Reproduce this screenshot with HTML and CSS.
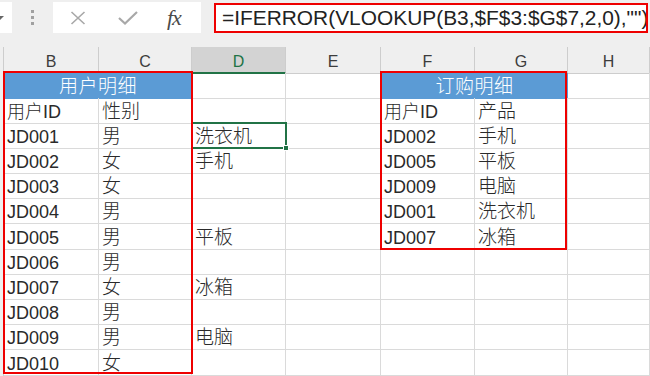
FILE: index.html
```html
<!DOCTYPE html>
<html lang="zh-CN">

<head>
    <meta charset="UTF-8" />
    <meta name="viewport" content="width=device-width, initial-scale=1.0" />
    <title>VLOOKUP 查询</title>
    <link rel="stylesheet" href="styles.css">
</head>

<body>
    <div class="toolbar">
        <div class="namebox"><span class="caret"></span></div>
        <div class="grip"><span></span><span></span><span></span></div>
        <div class="fnbox">
            <svg class="icon-x" width="16" height="14" viewBox="0 0 16 14">
                <path d="M1.5 1 L14.5 13 M14.5 1 L1.5 13" stroke="#a8a8a8" stroke-width="1.6" fill="none" />
            </svg>
            <svg class="icon-ok" width="20" height="14" viewBox="0 0 20 14">
                <path d="M1 7 L7 12.5 L19 1" stroke="#a8a8a8" stroke-width="2.2" fill="none" />
            </svg>
            <span class="fx">fx</span>
        </div>
        <div class="formula">=IFERROR(VLOOKUP(B3,$F$3:$G$7,2,0),"")</div>
    </div>

    <div class="sheet">
        <div class="row head">
            <div class="ch corner"></div>
            <div class="ch">B</div>
            <div class="ch">C</div>
            <div class="ch active">D</div>
            <div class="ch">E</div>
            <div class="ch">F</div>
            <div class="ch">G</div>
            <div class="ch">H</div>
        </div>

        <div class="row">
            <div class="rh"></div>
            <div class="c title zh">用户明细</div>
            <div class="c"></div>
            <div class="c"></div>
            <div class="c title zh">订购明细</div>
            <div class="c"></div>
        </div>
        <div class="row">
            <div class="rh"></div>
            <div class="c">用户ID</div>
            <div class="c zh">性别</div>
            <div class="c"></div>
            <div class="c"></div>
            <div class="c">用户ID</div>
            <div class="c zh">产品</div>
            <div class="c"></div>
        </div>
        <div class="row">
            <div class="rh"></div>
            <div class="c">JD001</div>
            <div class="c zh">男</div>
            <div class="c zh">洗衣机</div>
            <div class="c"></div>
            <div class="c">JD002</div>
            <div class="c zh">手机</div>
            <div class="c"></div>
        </div>
        <div class="row">
            <div class="rh"></div>
            <div class="c">JD002</div>
            <div class="c zh">女</div>
            <div class="c zh">手机</div>
            <div class="c"></div>
            <div class="c">JD005</div>
            <div class="c zh">平板</div>
            <div class="c"></div>
        </div>
        <div class="row">
            <div class="rh"></div>
            <div class="c">JD003</div>
            <div class="c zh">女</div>
            <div class="c"></div>
            <div class="c"></div>
            <div class="c">JD009</div>
            <div class="c zh">电脑</div>
            <div class="c"></div>
        </div>
        <div class="row">
            <div class="rh"></div>
            <div class="c">JD004</div>
            <div class="c zh">男</div>
            <div class="c"></div>
            <div class="c"></div>
            <div class="c">JD001</div>
            <div class="c zh">洗衣机</div>
            <div class="c"></div>
        </div>
        <div class="row">
            <div class="rh"></div>
            <div class="c">JD005</div>
            <div class="c zh">男</div>
            <div class="c zh">平板</div>
            <div class="c"></div>
            <div class="c">JD007</div>
            <div class="c zh">冰箱</div>
            <div class="c"></div>
        </div>
        <div class="row">
            <div class="rh"></div>
            <div class="c">JD006</div>
            <div class="c zh">男</div>
            <div class="c"></div>
            <div class="c"></div>
            <div class="c"></div>
            <div class="c"></div>
            <div class="c"></div>
        </div>
        <div class="row">
            <div class="rh"></div>
            <div class="c">JD007</div>
            <div class="c zh">女</div>
            <div class="c zh">冰箱</div>
            <div class="c"></div>
            <div class="c"></div>
            <div class="c"></div>
            <div class="c"></div>
        </div>
        <div class="row">
            <div class="rh"></div>
            <div class="c">JD008</div>
            <div class="c zh">男</div>
            <div class="c"></div>
            <div class="c"></div>
            <div class="c"></div>
            <div class="c"></div>
            <div class="c"></div>
        </div>
        <div class="row">
            <div class="rh"></div>
            <div class="c">JD009</div>
            <div class="c zh">男</div>
            <div class="c zh">电脑</div>
            <div class="c"></div>
            <div class="c"></div>
            <div class="c"></div>
            <div class="c"></div>
        </div>
        <div class="row">
            <div class="rh"></div>
            <div class="c">JD010</div>
            <div class="c zh">女</div>
            <div class="c"></div>
            <div class="c"></div>
            <div class="c"></div>
            <div class="c"></div>
            <div class="c"></div>
        </div>

        <!-- highlights drawn over the cells -->
        <div class="selected"></div>
        <div class="handle"></div>
        <div class="range range-users"></div>
        <div class="range range-orders"></div>
    </div>
</body>

</html>
```

FILE: styles.css
```css
body {
    margin: 0;
    width: 650px;
    height: 376px;
    overflow: hidden;
    background: #fff;
    font-family: "Liberation Sans", "Noto Sans CJK SC", sans-serif;
    color: #222;
}

/* formula bar */
.toolbar {
    height: 47px;
    box-sizing: border-box;
    padding-top: 2px;
    background: #efefef;
    display: flex;
    align-items: flex-start;
}

.namebox {
    width: 12px;
    height: 31px;
    background: #fff;
    display: flex;
    align-items: center;
}

.caret {
    margin-left: -4px;
    width: 0;
    height: 0;
    border-left: 4px solid transparent;
    border-right: 4px solid transparent;
    border-top: 4px solid #666;
}

.grip {
    margin: 8px 0 0 19px;
    display: flex;
    flex-direction: column;
    gap: 3px;
}

.grip span {
    width: 3px;
    height: 3px;
    background: #a0a0a0;
}

.fnbox {
    margin-left: 19px;
    width: 148px;
    height: 31px;
    background: #fff;
    display: flex;
    align-items: center;
}

.icon-x {
    margin-left: 17px;
}

.icon-ok {
    margin-left: 32px;
}

.fx {
    margin-left: 29px;
    font-family: "Liberation Serif", serif;
    font-style: italic;
    font-size: 22px;
    color: #4a4a4a;
    letter-spacing: -1px;
}

.formula {
    margin: 1px 0 0 13px;
    width: 434px;
    height: 30px;
    box-sizing: border-box;
    border: 2px solid #ee0000;
    background: #fff;
    padding-left: 6px;
    font-size: 20.9px;
    line-height: 26px;
    white-space: nowrap;
    overflow: hidden;
    color: #222;
}

/* sheet grid */
.sheet {
    position: relative;
}

.row {
    display: grid;
    grid-template-columns: 4px 95px 93px 94px 95px 94px 93px 82px;
    height: 25.2px;
}

.row.head {
    height: 25.5px;
    background: #efefef;
}

.ch {
    box-sizing: border-box;
    border-right: 1px solid #cdcdcd;
    border-bottom: 1px solid #cdcdcd;
    text-align: center;
    font-size: 16px;
    line-height: 21.5px;
    padding-top: 3.5px;
    color: #3c3c3c;
}

.ch.active {
    background: #d3d3d3;
    color: #217346;
    border-bottom: 2px solid #217346;
}

.rh {
    background: #efefef;
    border-right: 1px solid #cdcdcd;
    box-sizing: border-box;
}

.c {
    box-sizing: border-box;
    border-right: 1px solid #dadada;
    border-bottom: 1px solid #dadada;
    padding: 3px 0 0 3px;
    font-size: 18px;
    font-weight: 300;
    line-height: 22px;
    white-space: nowrap;
    color: #2a2a2a;
}

.zh {
    font-size: 19px;
}

.title {
    grid-column: span 2;
    background: #5b9bd5;
    color: #fff;
    text-align: center;
    padding-left: 0;
    letter-spacing: 0.5px;
    border-right: none;
    border-bottom-color: #5b9bd5;
}

/* overlays */
.selected {
    position: absolute;
    left: 191px;
    top: 74.5px;
    width: 96px;
    height: 27px;
    box-sizing: border-box;
    border: 2px solid #217346;
}

.handle {
    position: absolute;
    left: 283px;
    top: 98px;
    width: 6px;
    height: 6px;
    background: #217346;
    box-sizing: border-box;
    border: 1px solid #fff;
}

.range {
    position: absolute;
    top: 24px;
    box-sizing: border-box;
    border: 2px solid #ee0000;
}

.range-users {
    left: 3px;
    width: 190px;
    height: 303px;
}

.range-orders {
    left: 380px;
    width: 187px;
    height: 179px;
}
```
